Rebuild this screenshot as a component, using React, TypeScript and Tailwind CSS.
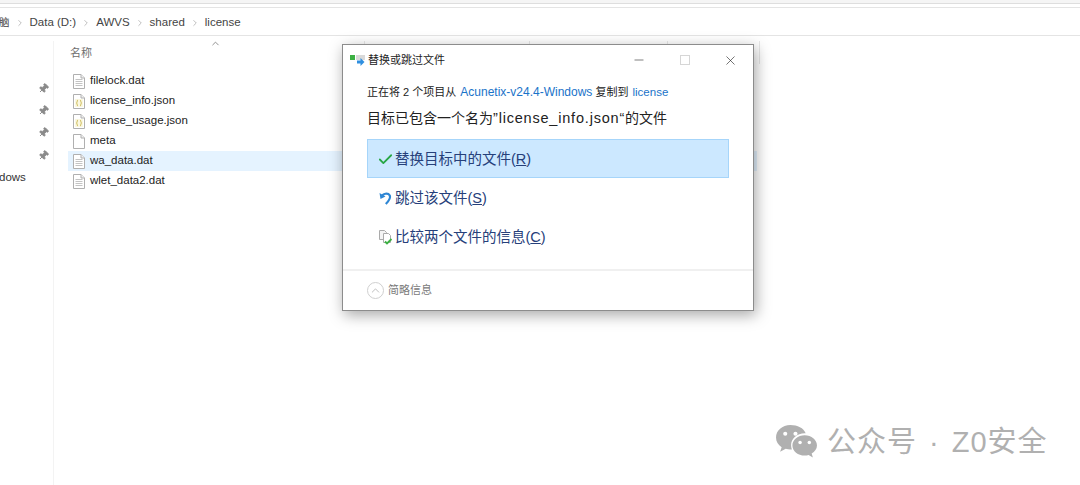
import { Check, ChevronRight, ChevronUp, Minus, Pin, X } from "lucide-react";

const files = [
  { name: "filelock.dat", kind: "text" },
  { name: "license_info.json", kind: "json" },
  { name: "license_usage.json", kind: "json" },
  { name: "meta", kind: "blank" },
  { name: "wa_data.dat", kind: "text", selected: true },
  { name: "wlet_data2.dat", kind: "text" },
];

const crumbs = ["脑", "Data (D:)", "AWVS", "shared", "license"];

function FileIcon({ kind }: { kind: string }) {
  return (
    <svg width="12" height="15" viewBox="0 0 12 15" className="shrink-0">
      <path d="M.5.500h7.500l3.500 3.500v10.500h-11z" fill="#fff" stroke="#b0b0b0" />
      <path d="M8 .500v3.500h3.500" fill="#f0f0f0" stroke="#b0b0b0" />
      {kind === "text" && <path d="M2.500 5.500h7M2.500 7.500h7M2.500 9.500h7M2.500 11.500h7" stroke="#c4c4c4" />}
      {kind === "json" && (
        <>
          <rect x="2" y="5" width="8" height="8" fill="#fbf8e0" />
          <path d="M5 6c-1.300 0-.4 3-1.500 3 1.100 0 .2 3 1.500 3M7 6c1.300 0 .4 3 1.500 3-1.100 0-.2 3-1.500 3" fill="none" stroke="#c9b64e" />
        </>
      )}
    </svg>
  );
}

function Choice({ icon, label, hot, active }: { icon: React.ReactNode; label: string; hot: string; active?: boolean }) {
  return (
    <div className={`flex h-[39px] items-center border pl-[8px] pt-[2px] ${active ? "border-[#a6d5fa] bg-[#cce8ff]" : "border-transparent"}`}>
      <span className="flex w-[19px] shrink-0 justify-center">{icon}</span>
      <span className="text-[14.500px] text-[#26407a]">
        {label}(<span className="underline">{hot}</span>)
      </span>
    </div>
  );
}

export default function App() {
  return (
    <div className="relative h-[485px] w-[1080px] overflow-hidden bg-white font-['Liberation_Sans','Noto_Sans_CJK_SC',sans-serif] text-[#1a1a1a]">
      <div className="h-[4px] border-b border-[#dedede] bg-[#f5f5f5]" />
      <div className="mt-[3px] flex h-[29px] items-center gap-[5px] border-y border-[#e4e4e4] pt-[2px] text-[11.500px] text-[#444]">
        {crumbs.map((c, i) => (
          <span key={c} className="flex items-center gap-[5px]">
            <span className={i === 0 ? "-ml-[1px] text-[10.500px]" : ""}>{c}</span>
            {i < crumbs.length - 1 && <ChevronRight size={10} strokeWidth={1.500} className="text-[#999]" />}
          </span>
        ))}
      </div>

      <div className="flex h-[449px]">
        <aside className="mt-[5px] flex w-[54px] shrink-0 flex-col border-r border-[#f3f3f3] pt-[36px]">
          {[0, 1, 2, 3].map((n) => (
            <div key={n} className="flex h-[22.300px] items-center justify-end pr-[4px]">
              <Pin size={11} className="rotate-45 fill-[#8a8a8a] text-[#8a8a8a]" />
            </div>
          ))}
          <span className="-ml-[1px] mt-[2px] text-[11.500px] leading-[18px] text-[#333]">dows</span>
        </aside>

        <main className="relative flex-1 pt-[5px]">
          <ChevronUp size={11} className="absolute left-[156px] top-[2px] text-[#888]" />
          <div className="flex h-[23px] text-[11px] leading-[24px] text-[#6d6d6d]">
            <div className="w-[311px] border-r border-[#e8e8e8] pl-[16px]">名称</div>
            <div className="w-[165px] border-r border-[#e8e8e8]" />
            <div className="w-[138px] border-r border-[#e8e8e8]" />
            <div className="w-[92px] border-r border-[#e8e8e8]" />
          </div>
          <ul className="mt-[7px]">
            {files.map((f) => (
              <li
                key={f.name}
                className={`ml-[14px] flex h-[20px] items-center gap-[5px] pl-[5px] text-[11.500px] text-[#222] ${f.selected ? "w-[689px] bg-[#e5f3ff]" : ""}`}
              >
                <FileIcon kind={f.kind} />
                {f.name}
              </li>
            ))}
          </ul>
        </main>
      </div>

      <section className="absolute left-[342px] top-[44px] flex h-[267px] w-[412px] flex-col border border-[#8c8c8c] bg-white shadow-[2px_4px_14px_rgba(0,0,0,0.35)]">
        <header className="flex h-[29px] items-center pl-[7px] pt-[1px] text-[11px] text-[#222]">
          <svg width="16" height="12" viewBox="0 0 16 12" className="mr-[2px]">
            <rect x="0" y="1" width="5" height="5" fill="#3cb043" />
            <rect x="6" y="1" width="9" height="5" fill="#d9d9d9" />
            <path d="M7 6.500h3.500V4l4 4-4 4V9.500H7z" fill="#2f8fe0" />
          </svg>
          <span>替换或跳过文件</span>
          <span className="ml-auto flex items-center">
            <Minus size={14} strokeWidth={1} className="mr-[34px]" />
            <span className="mr-[33px] h-[10px] w-[10px] border border-[#d6d6d6]" />
            <X size={15} strokeWidth={1} className="mr-[15px]" />
          </span>
        </header>
        <div className="flex flex-1 flex-col px-[24px] pt-[10px]">
          <p className="text-[11px] leading-[16px] text-[#222]">
            正在将 2 个项目从 <span className="ml-[1px] text-[12px] text-[#1a73c9]">Acunetix-v24.4-Windows</span> 复制到{" "}
            <span className="ml-[1px] text-[11.500px] text-[#1a73c9]">license</span>
          </p>
          <p className="mt-[8px] text-[14px] leading-[20px] text-[#222]">
            目标已包含一个名为<span className="text-[14.500px] tracking-[0.8px]">”license_info.json“</span>的文件
          </p>
          <div className="mt-[11px] flex flex-col">
            <Choice active icon={<Check size={17} strokeWidth={2.500} className="text-[#28a745]" />} label="替换目标中的文件" hot="R" />
            <Choice
              icon={
                <svg width="14" height="15" viewBox="0 0 14 15" fill="none">
                  <path d="M3 5.500C3.500 2.500 9 1.500 10.800 4.500c1 2.500-1 5.500-4 8.500" stroke="#2e86d4" strokeWidth="2.200" />
                  <path d="M.5 2l1 6 5-2.500z" fill="#2e86d4" />
                </svg>
              }
              label="跳过该文件"
              hot="S"
            />
            <Choice
              icon={
                <svg width="14" height="15" viewBox="0 0 14 15" fill="none">
                  <path d="M.5.500h5l2 2v7h-7z" fill="#f4f4f4" stroke="#aaa" />
                  <path d="M4.500 3.500h5l2 2v7h-7z" fill="#fff" stroke="#aaa" />
                  <path d="M6 11.500l2 2 4.500-4.500" stroke="#3cb043" strokeWidth="1.800" />
                </svg>
              }
              label="比较两个文件的信息"
              hot="C"
            />
          </div>
        </div>
        <footer className="flex h-[41px] items-center gap-[4px] border-t-2 border-[#f0f0f0] pl-[24px] text-[11px] text-[#7a7a7a]">
          <span className="flex h-[17px] w-[17px] items-center justify-center rounded-full border border-[#d0d0d0]">
            <ChevronUp size={13} strokeWidth={1} className="text-[#888]" />
          </span>
          简略信息
        </footer>
      </section>

      <div className="absolute left-[775px] top-[423px] flex items-center gap-[9px] text-[29px] leading-[36px] tracking-[1px] text-[#b0b0b0]">
        <svg width="43" height="35" viewBox="0 0 42 34" preserveAspectRatio="none">
          <path d="M15 1C7 1 1 6.500 1 13c0 4 2 7 5.500 9.500L5 27l5.500-3c1.500.4 3 .7 4.500.7h1.500c-.5-1.400-.8-2.800-.8-4.200 0-6.500 6-11.500 13.300-11.500h1C28 4 22 1 15 1z" fill="#b0b0b0" />
          <path d="M29 11c-6.500 0-12 4.300-12 9.800s5.500 9.800 12 9.800c1.300 0 2.600-.2 3.800-.6l4.200 2.500-1.200-3.800c3-1.900 5.200-4.700 5.200-7.900C41 15.300 35.500 11 29 11z" fill="#b0b0b0" />
          <circle cx="10" cy="9.500" r="2" fill="#fff" />
          <circle cx="20" cy="9.500" r="2" fill="#fff" />
          <circle cx="24.500" cy="18" r="1.700" fill="#fff" />
          <circle cx="33.500" cy="18" r="1.700" fill="#fff" />
        </svg>
        <span className="pt-[1px]">
          公众号<span className="mx-[12px]">·</span>Z0安全
        </span>
      </div>
    </div>
  );
}
